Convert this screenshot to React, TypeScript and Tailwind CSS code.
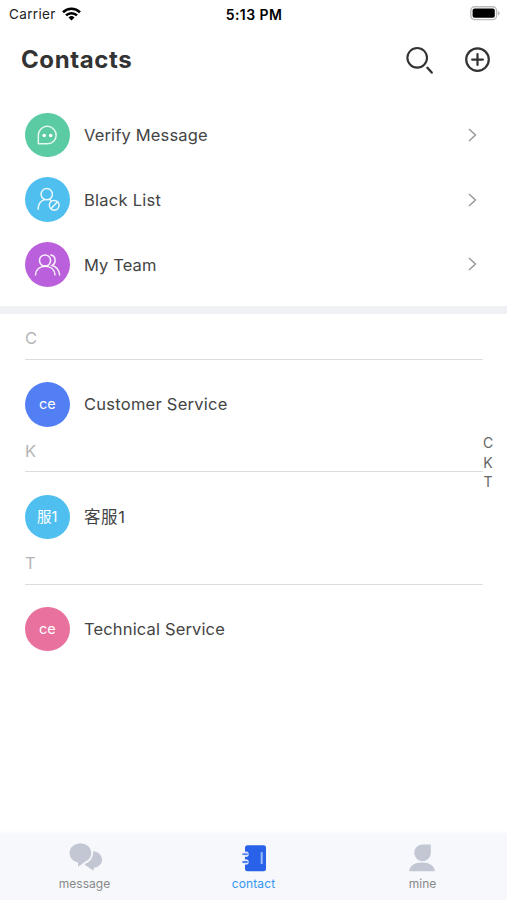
import type { ReactNode } from "react";

function VerifyIcon() {
  return (
    <svg className="size-full" viewBox="0 0 44 44" fill="none" stroke="#fff" strokeOpacity=".85" strokeWidth="1.5" strokeLinejoin="round">
      <path d="M13.2 30.4V22a8.8 8.8 0 0 1 17.6 0c0 4.8-3.6 8.4-8.4 8.4Z" />
      <circle cx="19" cy="22.2" r="1.8" fill="#fff" stroke="none" />
      <circle cx="25.4" cy="22.2" r="1.8" fill="#fff" stroke="none" />
    </svg>
  );
}

function BlackListIcon() {
  return (
    <svg className="size-full" viewBox="0 0 44 44" fill="none" stroke="#fff" strokeOpacity=".9" strokeWidth="1.5" strokeLinecap="round">
      <circle cx="21.5" cy="17" r="5.6" />
      <path d="M13 32c0-5 2.4-8.2 6.2-9.6" />
      <path d="M24.4 22.4l1.3.7" />
      <circle cx="28.9" cy="28" r="4.8" />
      <path d="M25.8 31.2l6.2-6.4" />
    </svg>
  );
}

function TeamIcon() {
  return (
    <svg className="size-full" viewBox="0 0 44 44" fill="none" stroke="#fff" strokeOpacity=".9" strokeWidth="1.5" strokeLinecap="round">
      <circle cx="19.8" cy="18.3" r="5.5" />
      <path d="M10.4 32.5c.3-5.2 4.2-8.6 9.6-8.6s9.2 3.4 9.7 8.6" />
      <path d="M25.6 12.9c4.9.6 5.6 7.8 1.3 10.3 4.2 1.3 6.9 4.6 7.3 9.3" />
    </svg>
  );
}

function MenuRow({ color, label, icon }: { color: string; label: ReactNode; icon: ReactNode }) {
  return (
    <div className="flex h-[64.75px] items-center pr-[30px] pl-[25px]">
      <div className={`size-[44.5px] rounded-full ${color}`}>{icon}</div>
      <div className="ml-[14.5px] flex-1 pt-[1px]">{label}</div>
      <svg width="9" height="14" viewBox="0 0 9 14" fill="none" stroke="#999" strokeWidth="1.5">
        <path d="M1 1l6.4 6L1 13" />
      </svg>
    </div>
  );
}

function Section({ letter, color, short, name }: { letter: string; color: string; short: ReactNode; name: ReactNode }) {
  return (
    <section className="h-[112.4px]">
      <div className="mr-[24px] ml-[25px] flex h-[46px] items-center border-b border-[#dcdcdc] pt-[4px] text-[16.5px] text-[#b5b5b5]">
        {letter}
      </div>
      <div className="flex items-center pt-[22.2px] pl-[25px]">
        <div className={`flex size-[44.5px] items-center justify-center rounded-full pb-[1px] text-[14.5px] text-white ${color}`}>{short}</div>
        <div className="ml-[14.5px]">{name}</div>
      </div>
    </section>
  );
}

export default function App() {
  return (
    <div className="flex h-[900px] w-[507px] flex-col overflow-hidden bg-white font-[Inter,'Noto_Sans_CJK_SC',sans-serif] text-[16.5px] text-[#444]">
      <div className="grid h-[27px] grid-cols-3 items-center pr-[7px] pl-[9px] text-[13.5px] text-[#222]">
        <div className="flex items-center gap-[6px]">
          <span className="pt-[1px] tracking-[0.35px]">Carrier</span>
          <svg width="19" height="14" viewBox="0 0 19 14" fill="none" stroke="#000" strokeWidth="2.6">
            <path d="M1 5.2a12.2 12.2 0 0 1 17 0" />
            <path d="M4 8.4a8 8 0 0 1 11 0" />
            <path d="M9.5 13.6l-3-3.1a4.4 4.4 0 0 1 6 0z" fill="#000" stroke="none" />
          </svg>
        </div>
        <div className="pr-[1px] pt-[1px] text-center text-[14px] font-semibold tracking-[0.45px] text-black">5:13 PM</div>
        <svg className="justify-self-end" width="30" height="15" viewBox="0 0 30 15">
          <rect x=".8" y=".8" width="25.8" height="12.8" rx="3.8" fill="#fff" stroke="#bbb" strokeWidth="1.4" />
          <rect x="2.6" y="2.6" width="22.2" height="9.2" rx="2" fill="#000" />
          <path d="M28 5c2.2.9 2.2 3.6 0 4.5z" fill="#bbb" />
        </svg>
      </div>
      <header className="flex h-[75.5px] items-start pt-[17px] pr-[16px] pl-[21px]">
        <h1 className="flex-1 text-[24px] leading-[32px] font-bold tracking-[0.6px] text-[#333]">Contacts</h1>
        <svg width="30" height="32" viewBox="0 0 30 32" fill="none" stroke="#333" strokeWidth="2.1" strokeLinecap="round">
          <circle cx="11.2" cy="13.8" r="9.8" />
          <path d="M21.4 23.8l4.3 4.7" strokeWidth="2.4" />
        </svg>
        <svg className="ml-[28px]" width="27" height="32" viewBox="0 0 27 32" fill="none" stroke="#333" strokeWidth="2.2" strokeLinecap="round">
          <circle cx="13.5" cy="15.6" r="11.3" />
          <path d="M8.1 15.6h10.8M13.5 10.2v10.8" />
        </svg>
      </header>
      <div>
        <MenuRow color="bg-[#5acba3]" label={<span className="tracking-[0.15px]">Verify Message</span>} icon={<VerifyIcon />} />
        <MenuRow color="bg-[#4fbfef]" label={<span className="tracking-[0.25px]">Black List</span>} icon={<BlackListIcon />} />
        <MenuRow color="bg-[#bb60dc]" label={<span className="tracking-[0.1px]">My Team</span>} icon={<TeamIcon />} />
      </div>
      <div className="mt-[9.25px] h-[8px] shrink-0 bg-[#eff1f4]" />
      <main className="flex flex-1 flex-col">
        <div className="flex">
          <div className="flex-1">
            <Section letter="C" color="bg-[#537ff4]" short="ce" name={<span className="tracking-[0.25px]">Customer Service</span>} />
            <Section letter="K" color="bg-[#4fbfef]" short={<span className="pt-[2px]">服1</span>} name={<span className="block pt-[2px] tracking-[0.6px]">客服1</span>} />
            <Section letter="T" color="bg-[#e8719d]" short="ce" name={<span className="tracking-[0.15px]">Technical Service</span>} />
          </div>
          <nav className="-ml-[24px] flex w-[24px] flex-col items-start pt-[119px] text-[14px] leading-[19.5px] text-[#666]">
            <span className="w-[10px] text-center">C</span>
            <span className="w-[10px] text-center">K</span>
            <span className="w-[10px] text-center">T</span>
          </nav>
        </div>
      </main>
      <footer className="grid h-[70px] grid-cols-3 bg-linear-to-b from-white to-[#f6f8fb] to-[5px] pt-[2px] text-[12px] text-[#888]">
        <div className="flex flex-col items-center pt-[10px]">
          <svg className="ml-[2px]" width="34" height="32" viewBox="0 0 34 32" fill="#c2c7d3">
            <ellipse cx="23.6" cy="17.6" rx="9.6" ry="8.4" />
            <path d="M18.5 24.5l5.8 4.2 1.4-5.5Z" />
            <ellipse cx="11.5" cy="11" rx="12.6" ry="11.6" fill="#f6f8fb" />
            <ellipse cx="11.4" cy="11" rx="10.8" ry="9.8" />
            <path d="M9 19.5v5.2c2.7-1.3 5-3.2 7-5.4Z" />
          </svg>
          <span className="mt-[1px] leading-[17px]">message</span>
        </div>
        <div className="flex flex-col items-center pt-[10px] text-[#3596f2]">
          <svg width="28" height="32" viewBox="0 0 28 32" fill="none">
            <rect x="5" y="3.2" width="21" height="26" rx="2.5" fill="#2962e8" />
            <path d="M21.7 10.2v11.8" stroke="#9dbbfa" strokeWidth="2" />
            <circle cx="6" cy="12.2" r="2.7" fill="#dce7fb" />
            <circle cx="6" cy="20" r="2.7" fill="#dce7fb" />
            <path d="M2.8 12.2h4.4M2.8 20h4.4" stroke="#2962e8" strokeWidth="1.3" strokeLinecap="round" />
          </svg>
          <span className="mt-[1px] leading-[17px] tracking-[0.1px]">contact</span>
        </div>
        <div className="flex flex-col items-center pt-[10px]">
          <svg className="mr-[2px]" width="28" height="32" viewBox="0 0 28 32" fill="#c2c7d3">
            <path d="M14 2.6h8.8v8A8.3 8.3 0 1 1 14 2.6Z" />
            <path d="M1.2 29.3c0-5.5 5.4-8.9 12.8-8.9s12.8 3.4 12.8 8.9Z" />
          </svg>
          <span className="mt-[1px] leading-[17px]">mine</span>
        </div>
      </footer>
    </div>
  );
}
